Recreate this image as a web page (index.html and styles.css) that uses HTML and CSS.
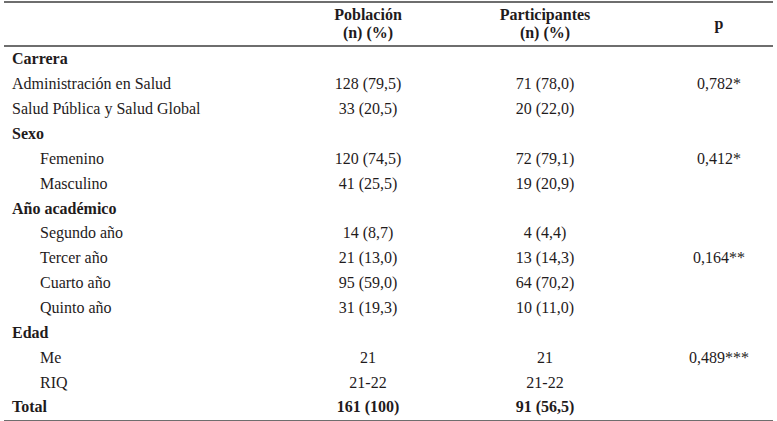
FILE: index.html
```html
<!DOCTYPE html>
<html lang="es">
<head>
<meta charset="utf-8">
<title>Tabla</title>
<link rel="stylesheet" href="styles.css">
</head>
<body>
<table class="data">
  <colgroup>
    <col class="c1"><col class="c2"><col class="c3"><col class="c4">
  </colgroup>
  <thead>
    <tr>
      <th></th>
      <th>Población<br>(n) (%)</th>
      <th>Participantes<br>(n) (%)</th>
      <th>p</th>
    </tr>
  </thead>
  <tbody>
    <tr class="group"><td>Carrera</td><td></td><td></td><td></td></tr>
    <tr><td>Administración en Salud</td><td>128 (79,5)</td><td>71 (78,0)</td><td>0,782*</td></tr>
    <tr><td>Salud Pública y Salud Global</td><td>33 (20,5)</td><td>20 (22,0)</td><td></td></tr>
    <tr class="group"><td>Sexo</td><td></td><td></td><td></td></tr>
    <tr class="sub"><td>Femenino</td><td>120 (74,5)</td><td>72 (79,1)</td><td>0,412*</td></tr>
    <tr class="sub"><td>Masculino</td><td>41 (25,5)</td><td>19 (20,9)</td><td></td></tr>
    <tr class="group"><td>Año académico</td><td></td><td></td><td></td></tr>
    <tr class="sub"><td>Segundo año</td><td>14 (8,7)</td><td>4 (4,4)</td><td></td></tr>
    <tr class="sub"><td>Tercer año</td><td>21 (13,0)</td><td>13 (14,3)</td><td>0,164**</td></tr>
    <tr class="sub"><td>Cuarto año</td><td>95 (59,0)</td><td>64 (70,2)</td><td></td></tr>
    <tr class="sub"><td>Quinto año</td><td>31 (19,3)</td><td>10 (11,0)</td><td></td></tr>
    <tr class="group"><td>Edad</td><td></td><td></td><td></td></tr>
    <tr class="sub"><td>Me</td><td>21</td><td>21</td><td>0,489***</td></tr>
    <tr class="sub"><td>RIQ</td><td>21-22</td><td>21-22</td><td></td></tr>
    <tr class="total"><td>Total</td><td>161 (100)</td><td>91 (56,5)</td><td></td></tr>
  </tbody>
</table>
</body>
</html>
```
FILE: styles.css
```css
html, body {
  margin: 0;
  padding: 0;
  background: #ffffff;
}
body {
  padding: 1px 4px 0 4px;
  font-family: "Liberation Serif", "Times New Roman", serif;
  font-size: 16px;
  color: #1f1b1c;
}
.data {
  width: 769px;
  border-collapse: collapse;
  table-layout: fixed;
  border-top: 2px solid #6e6e6e;
  border-bottom: 2px solid #6e6e6e;
  font-family: inherit;
}
.c1 { width: 307px; }
.c2 { width: 114px; }
.c3 { width: 240px; }
.c4 { width: 108px; }
thead th {
  height: 42px;
  padding: 0;
  font-weight: bold;
  line-height: 18px;
  text-align: center;
  vertical-align: middle;
  border-bottom: 2px solid #6e6e6e;
}
tbody td {
  height: 24.86px;
  padding: 0;
  line-height: 18px;
  text-align: center;
  vertical-align: middle;
  white-space: nowrap;
}
tbody td:first-child {
  text-align: left;
  padding-left: 8px;
}
tbody tr.sub td:first-child {
  padding-left: 36px;
}
tr.group td, tr.total td {
  font-weight: bold;
}
```
